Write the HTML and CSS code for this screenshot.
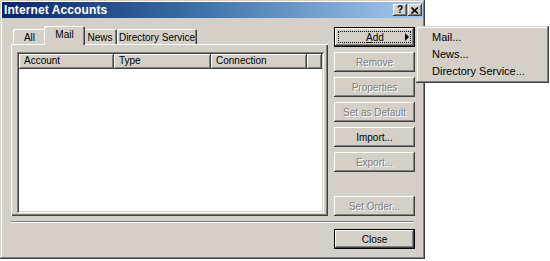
FILE: index.html
```html
<!DOCTYPE html>
<html>
<head>
<meta charset="utf-8">
<title>Internet Accounts</title>
<link rel="stylesheet" href="styles.css">
</head>
<body>
<div class="dialog">
  <div class="titlebar">
    <span class="title">Internet Accounts</span>
    <div class="tb-buttons">
      <span class="tbtn help">?</span>
      <span class="tbtn close"><svg width="8" height="7" viewBox="0 0 8 7"><path d="M0.5 0.5 L7 6.5 M7 0.5 L0.5 6.5" stroke="#000" stroke-width="1.6" fill="none"/></svg></span>
    </div>
  </div>
  <div class="body">
    <div class="main">
      <div class="tabarea">
        <div class="tabs">
          <div class="tab t-all">All</div>
          <div class="tab t-mail active">Mail</div>
          <div class="tab t-news">News</div>
          <div class="tab t-dir">Directory Service</div>
        </div>
        <div class="panel">
          <div class="listview">
            <div class="header">
              <div class="col c-account">Account</div>
              <div class="col c-type">Type</div>
              <div class="col c-conn">Connection</div>
              <div class="col c-rest"></div>
            </div>
          </div>
        </div>
      </div>
      <div class="buttons">
        <div class="btn default focus add"><span class="label"><u>A</u>dd</span><span class="arrow"></span></div>
        <div class="btn disabled">Remove</div>
        <div class="btn disabled">Properties</div>
        <div class="btn disabled">Set as Default</div>
        <div class="btn">Import...</div>
        <div class="btn disabled">Export...</div>
        <div class="btn disabled last">Set Order...</div>
      </div>
    </div>
    <div class="separator"></div>
    <div class="footer">
      <div class="btn default">Close</div>
    </div>
  </div>
</div>
<div class="menu">
  <div class="item">Mail...</div>
  <div class="item">News...</div>
  <div class="item">Directory Service...</div>
</div>
</body>
</html>
```

FILE: styles.css
```css
html, body {
  margin: 0;
  padding: 0;
  background: #ffffff;
}
body {
  width: 550px;
  height: 261px;
  position: relative;
  overflow: hidden;
  font-family: "Liberation Sans", Arial, sans-serif;
  font-size: 10px;
  color: #000;
}
.dialog {
  width: 425px;
  height: 259px;
  box-sizing: border-box;
  background: #d4d0c8;
  padding: 2px;
  box-shadow: inset -1px -1px #404040, inset 1px 1px #d4d0c8, inset -2px -2px #808080, inset 2px 2px #ffffff;
  display: flex;
  flex-direction: column;
}
.titlebar {
  height: 16px;
  background: linear-gradient(to right, #0a246a 0%, #3a6ea5 45%, #a6caf0 100%);
  display: flex;
  align-items: center;
  justify-content: space-between;
  padding: 0 1px 0 2px;
}
.title {
  color: #fff;
  font-weight: bold;
  font-size: 12px;
  letter-spacing: 0.1px;
}
.tb-buttons {
  display: flex;
  gap: 1px;
}
.tbtn {
  width: 14px;
  height: 12px;
  background: #d4d0c8;
  box-shadow: inset -1px -1px #404040, inset 1px 1px #ffffff, inset -2px -2px #808080;
  display: flex;
  align-items: center;
  justify-content: center;
  font-weight: bold;
  font-size: 10px;
  line-height: 12px;
}
.tbtn svg { display: block; margin-left: -1px; }
.body {
  flex: 1;
  padding: 8px 8px 0 9px;
  display: flex;
  flex-direction: column;
}
.main {
  height: 190px;
  display: flex;
  gap: 6px;
}
.tabarea {
  width: 317px;
  display: flex;
  flex-direction: column;
}
.tabs {
  height: 18px;
  display: flex;
  align-items: flex-end;
  padding-left: 2px;
}
.tab {
  height: 15px;
  box-sizing: border-box;
  background: #d4d0c8;
  border-radius: 2px 2px 0 0;
  box-shadow: inset 1px 1px #ffffff, inset -1px 0 #404040, inset -2px 0 #808080;
  display: flex;
  align-items: center;
  justify-content: center;
  padding-top: 1px;
}
.t-all { width: 33px; }
.t-mail { width: 38px; }
.t-news { width: 34px; }
.t-dir { width: 80px; }
.tab.active {
  height: 19px;
  margin: 0 -2px -1px;
  width: 41px;
  position: relative;
  z-index: 1;
  align-items: flex-start;
  padding-top: 3px;
}
.panel {
  flex: 1;
  box-sizing: border-box;
  box-shadow: inset 1px 1px #ffffff, inset -1px -1px #404040, inset -2px -2px #808080;
  padding: 8px 4px 3px 6px;
  display: flex;
}
.listview {
  flex: 1;
  background: #ffffff;
  box-shadow: inset 1px 1px #808080, inset -1px -1px #ffffff, inset 2px 2px #404040, inset -2px -2px #d4d0c8;
  padding: 2px;
}
.header {
  height: 15px;
  display: flex;
}
.col {
  height: 15px;
  box-sizing: border-box;
  background: #d4d0c8;
  box-shadow: inset -1px -1px #404040, inset 1px 1px #ffffff, inset -2px -2px #808080;
  padding-left: 5px;
  line-height: 14px;
}
.c-account { width: 95px; }
.c-type { width: 97px; }
.c-conn { width: 96px; }
.c-rest { flex: 1; }
.buttons {
  width: 81px;
  padding-top: 1px;
  display: flex;
  flex-direction: column;
  gap: 5px;
}
.btn {
  height: 20px;
  width: 81px;
  box-sizing: border-box;
  background: #d4d0c8;
  box-shadow: inset -1px -1px #404040, inset 1px 1px #ffffff, inset -2px -2px #808080, inset 2px 2px #d4d0c8;
  display: flex;
  align-items: center;
  justify-content: center;
}
.btn.disabled {
  color: #808080;
  text-shadow: 1px 1px 0 #ffffff;
}
.btn.last { margin-top: auto; }
.btn.default {
  border: 1px solid #000;
  box-shadow: inset -1px -1px #404040, inset 1px 1px #ffffff, inset -2px -2px #808080;
}
.btn.focus {
  outline: 1px dotted #000;
  outline-offset: -5px;
}
.add {
  padding: 0 5px 0 10px;
}
.add .label { flex: 1; text-align: center; }
.arrow {
  width: 0;
  height: 0;
  border-left: 4px solid #000;
  border-top: 4px solid transparent;
  border-bottom: 4px solid transparent;
}
.separator {
  margin-top: 5px;
  height: 1px;
  border-top: 1px solid #808080;
  border-bottom: 1px solid #ffffff;
  height: 0;
  width: 403px;
}
.footer {
  margin-top: 6px;
  display: flex;
  justify-content: flex-end;
  width: 404px;
}
.menu {
  position: absolute;
  left: 416px;
  top: 26px;
  width: 133px;
  height: 57px;
  box-sizing: border-box;
  background: #d4d0c8;
  box-shadow: inset -1px -1px #404040, inset 1px 1px #d4d0c8, inset -2px -2px #808080, inset 2px 2px #ffffff;
  padding: 3px;
}
.item {
  height: 17px;
  line-height: 17px;
  padding-left: 13px;
  font-size: 11px;
}
```
